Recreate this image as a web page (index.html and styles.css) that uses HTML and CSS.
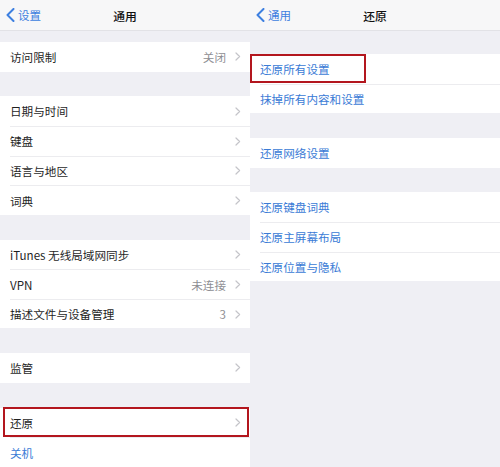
FILE: index.html
```html
<!DOCTYPE html>
<html lang="zh-CN">
<head>
<meta charset="utf-8">
<link rel="stylesheet" href="styles.css">
</head>
<body>
<div class="screens">
  <section class="panel">
    <header class="nav">
      <div class="back">
        <svg class="back-icon" width="9" height="14" viewBox="0 0 9 14"><polyline points="7.5,1 1.5,7 7.5,13" fill="none" stroke="#3d7fe0" stroke-width="2" stroke-linecap="round" stroke-linejoin="round"/></svg>
        <span>设置</span>
      </div>
      <div class="title">通用</div>
    </header>
    <div class="groups groups-left">
      <div class="group">
        <div class="row"><div class="row-body"><span class="label">访问限制</span><span class="value">关闭</span><svg class="chev" width="6" height="9" viewBox="0 0 6 9"><polyline points="1,1 4.6,4.5 1,8" fill="none" stroke="#c4c4c9" stroke-width="1.2" stroke-linecap="round" stroke-linejoin="round"/></svg></div></div>
      </div>
      <div class="group">
        <div class="row"><div class="row-body"><span class="label">日期与时间</span><svg class="chev" width="6" height="9" viewBox="0 0 6 9"><polyline points="1,1 4.6,4.5 1,8" fill="none" stroke="#c4c4c9" stroke-width="1.2" stroke-linecap="round" stroke-linejoin="round"/></svg></div></div>
        <div class="row"><div class="row-body"><span class="label">键盘</span><svg class="chev" width="6" height="9" viewBox="0 0 6 9"><polyline points="1,1 4.6,4.5 1,8" fill="none" stroke="#c4c4c9" stroke-width="1.2" stroke-linecap="round" stroke-linejoin="round"/></svg></div></div>
        <div class="row"><div class="row-body"><span class="label">语言与地区</span><svg class="chev" width="6" height="9" viewBox="0 0 6 9"><polyline points="1,1 4.6,4.5 1,8" fill="none" stroke="#c4c4c9" stroke-width="1.2" stroke-linecap="round" stroke-linejoin="round"/></svg></div></div>
        <div class="row"><div class="row-body"><span class="label">词典</span><svg class="chev" width="6" height="9" viewBox="0 0 6 9"><polyline points="1,1 4.6,4.5 1,8" fill="none" stroke="#c4c4c9" stroke-width="1.2" stroke-linecap="round" stroke-linejoin="round"/></svg></div></div>
      </div>
      <div class="group">
        <div class="row"><div class="row-body"><span class="label">iTunes 无线局域网同步</span><svg class="chev" width="6" height="9" viewBox="0 0 6 9"><polyline points="1,1 4.6,4.5 1,8" fill="none" stroke="#c4c4c9" stroke-width="1.2" stroke-linecap="round" stroke-linejoin="round"/></svg></div></div>
        <div class="row"><div class="row-body"><span class="label">VPN</span><span class="value">未连接</span><svg class="chev" width="6" height="9" viewBox="0 0 6 9"><polyline points="1,1 4.6,4.5 1,8" fill="none" stroke="#c4c4c9" stroke-width="1.2" stroke-linecap="round" stroke-linejoin="round"/></svg></div></div>
        <div class="row"><div class="row-body"><span class="label">描述文件与设备管理</span><span class="value">3</span><svg class="chev" width="6" height="9" viewBox="0 0 6 9"><polyline points="1,1 4.6,4.5 1,8" fill="none" stroke="#c4c4c9" stroke-width="1.2" stroke-linecap="round" stroke-linejoin="round"/></svg></div></div>
      </div>
      <div class="group">
        <div class="row"><div class="row-body"><span class="label">监管</span><svg class="chev" width="6" height="9" viewBox="0 0 6 9"><polyline points="1,1 4.6,4.5 1,8" fill="none" stroke="#c4c4c9" stroke-width="1.2" stroke-linecap="round" stroke-linejoin="round"/></svg></div></div>
      </div>
      <div class="group">
        <div class="row marked marked-left"><div class="row-body"><span class="label">还原</span><svg class="chev" width="6" height="9" viewBox="0 0 6 9"><polyline points="1,1 4.6,4.5 1,8" fill="none" stroke="#c4c4c9" stroke-width="1.2" stroke-linecap="round" stroke-linejoin="round"/></svg></div></div>
        <div class="row"><div class="row-body"><span class="label link">关机</span></div></div>
      </div>
    </div>
  </section>
  <section class="panel">
    <header class="nav">
      <div class="back">
        <svg class="back-icon" width="9" height="14" viewBox="0 0 9 14"><polyline points="7.5,1 1.5,7 7.5,13" fill="none" stroke="#3d7fe0" stroke-width="2" stroke-linecap="round" stroke-linejoin="round"/></svg>
        <span>通用</span>
      </div>
      <div class="title">还原</div>
    </header>
    <div class="groups groups-right">
      <div class="group">
        <div class="row marked marked-right"><div class="row-body"><span class="label link">还原所有设置</span></div></div>
        <div class="row"><div class="row-body"><span class="label link">抹掉所有内容和设置</span></div></div>
      </div>
      <div class="group">
        <div class="row"><div class="row-body"><span class="label link">还原网络设置</span></div></div>
      </div>
      <div class="group">
        <div class="row"><div class="row-body"><span class="label link">还原键盘词典</span></div></div>
        <div class="row"><div class="row-body"><span class="label link">还原主屏幕布局</span></div></div>
        <div class="row"><div class="row-body"><span class="label link">还原位置与隐私</span></div></div>
      </div>
    </div>
  </section>
</div>
</body>
</html>
```
FILE: styles.css
```css
* { box-sizing: border-box; }
html, body { margin: 0; padding: 0; }
body {
  width: 500px;
  height: 467px;
  overflow: hidden;
  background: #efeff4;
  font-family: "Noto Sans CJK SC", "Noto Sans", sans-serif;
  color: #1f1f1f;
}
.screens {
  display: flex;
  width: 500px;
  height: 467px;
}
.panel {
  width: 250px;
  height: 467px;
  background: #efeff4;
  display: flex;
  flex-direction: column;
}
.nav {
  height: 31px;
  flex: none;
  background: #f7f7f8;
  border-bottom: 1px solid #e2e2e6;
  display: grid;
  grid-template-columns: 1fr auto 1fr;
  align-items: center;
}
.back {
  display: flex;
  align-items: center;
  gap: 3px;
  padding-left: 6px;
  color: #3d7fe0;
  font-size: 11.5px;
  grid-column: 1;
  grid-row: 1;
}
.back-icon { display: block; margin-top: 0; }
.title {
  grid-column: 2;
  grid-row: 1;
  font-size: 11.8px;
  font-weight: 500;
  color: #111;
}
.groups {
  display: flex;
  flex-direction: column;
  gap: 24.8px;
}
.groups-left { padding-top: 11px; }
.groups-right { padding-top: 23px; }
.group {
  background: #fff;
  display: flex;
  flex-direction: column;
}
.row {
  height: 29.6px;
  padding-left: 10px;
  display: flex;
  position: relative;
}
.row-body {
  flex: 1;
  display: flex;
  align-items: center;
  padding-right: 9px;
  padding-top: 2px;
  font-size: 11.6px;
  line-height: 1;
}
.row + .row .row-body { border-top: 1px solid #ececef; }
.label { flex: 1; white-space: nowrap; }
.label.link { color: #3a7bd6; }
.value { color: #8e8e93; margin-right: 9px; }
.chev { display: block; flex: none; margin-top: -2px; }
.marked::after {
  content: "";
  position: absolute;
  border: 2px solid #b3161e;
  pointer-events: none;
}
.marked-left::after { left: 3px; right: 1px; top: -1px; bottom: 0; }
.marked-right::after { left: 0; width: 112px; top: 0; bottom: 0.5px; }
```
